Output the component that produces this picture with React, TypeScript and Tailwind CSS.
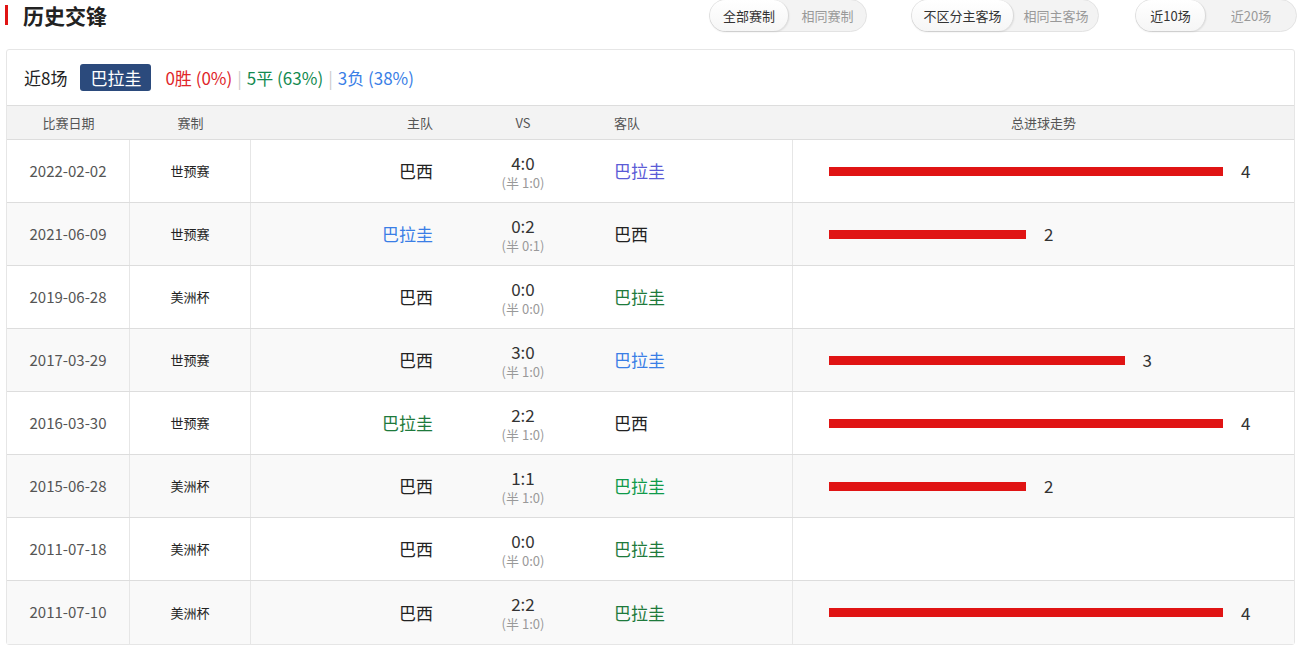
import React from "react";

const rows = [
  { d: "2022-02-02", t: "世预赛", h: "巴西", hc: "text-[#222]", s: "4:0", hs: "1:0", a: "巴拉圭", ac: "text-[#5b5bd6]", g: 4 },
  { d: "2021-06-09", t: "世预赛", h: "巴拉圭", hc: "text-[#3a7ee6]", s: "0:2", hs: "0:1", a: "巴西", ac: "text-[#222]", g: 2 },
  { d: "2019-06-28", t: "美洲杯", h: "巴西", hc: "text-[#222]", s: "0:0", hs: "0:0", a: "巴拉圭", ac: "text-[#1e7a3c]", g: 0 },
  { d: "2017-03-29", t: "世预赛", h: "巴西", hc: "text-[#222]", s: "3:0", hs: "1:0", a: "巴拉圭", ac: "text-[#3a7ee6]", g: 3 },
  { d: "2016-03-30", t: "世预赛", h: "巴拉圭", hc: "text-[#1e7a3c]", s: "2:2", hs: "1:0", a: "巴西", ac: "text-[#222]", g: 4 },
  { d: "2015-06-28", t: "美洲杯", h: "巴西", hc: "text-[#222]", s: "1:1", hs: "1:0", a: "巴拉圭", ac: "text-[#0f9a4a]", g: 2 },
  { d: "2011-07-18", t: "美洲杯", h: "巴西", hc: "text-[#222]", s: "0:0", hs: "0:0", a: "巴拉圭", ac: "text-[#1e7a3c]", g: 0 },
  { d: "2011-07-10", t: "美洲杯", h: "巴西", hc: "text-[#222]", s: "2:2", hs: "1:0", a: "巴拉圭", ac: "text-[#1e7a3c]", g: 4 },
];

function Pill({ a, b, w1, w2 }: { a: string; b: string; w1: string; w2: string }) {
  return (
    <div className="flex h-[33px] rounded-full bg-[#f3f3f3] border border-[#e3e3e3] text-[13px]">
      <div className={`${w1} flex items-center justify-center rounded-full bg-gradient-to-b from-white to-[#f6f6f6] border-r border-[#d8d8d8] shadow-[0_1px_2px_rgba(0,0,0,0.12)] text-[#333]`}>{a}</div>
      <div className={`${w2} flex items-center justify-center text-[#999]`}>{b}</div>
    </div>
  );
}

export default function App() {
  return (
    <div className="w-[1297px] h-[651px] bg-white overflow-hidden" style={{ fontFamily: '"Microsoft YaHei","Noto Sans CJK SC",sans-serif' }}>
      <div className="flex items-start h-[49px]">
        <div className="flex items-center mt-[5px] ml-[5px]">
          <div className="w-[3px] h-[20px] bg-[#e01414]" />
          <div className="ml-[15px] text-[21px] font-bold text-[#222] leading-[20px]">历史交锋</div>
        </div>
        <div className="flex gap-[18px] ml-auto -mt-[1px]">
          <div className="mr-[26px]"><Pill a="全部赛制" b="相同赛制" w1="w-[79px]" w2="w-[77px]" /></div>
          <div className="mr-[18px]"><Pill a="不区分主客场" b="相同主客场" w1="w-[102px]" w2="w-[84px]" /></div>
          <Pill a="近10场" b="近20场" w1="w-[70px]" w2="w-[90px]" />
        </div>
      </div>
      <div className="ml-[6px] mr-[2px] border border-[#e6e6e6] rounded-[3px]">
        <div className="h-[55px] flex items-center pl-[17px] text-[17px]">
          <span className="text-[#222]">近8场</span>
          <span className="ml-[13px] bg-[#2b4a7c] text-white rounded-[3px] px-[10px] h-[27px] flex items-center">巴拉圭</span>
          <span className="ml-[14px] text-[#e0252a]">0胜 (0%)</span>
          <span className="mx-[5px] text-[#ccc]">|</span>
          <span className="text-[#138a50]">5平 (63%)</span>
          <span className="mx-[5px] text-[#ccc]">|</span>
          <span className="text-[#3a7ee6]">3负 (38%)</span>
        </div>
        <div className="flex h-[35px] bg-[#f3f3f3] border-y border-[#ddd] text-[13px] text-[#555] items-center">
          <div className="w-[123px] text-center">比赛日期</div>
          <div className="w-[121px] text-center">赛制</div>
          <div className="w-[222px] text-right pr-[40px]">主队</div>
          <div className="w-[100px] text-center">VS</div>
          <div className="w-[220px] pl-[41px]">客队</div>
          <div className="flex-1 text-center">总进球走势</div>
        </div>
        {rows.map((r, i) => (
          <div key={i} className={`flex h-[63px] items-center ${i % 2 ? "bg-[#f9f9f9]" : "bg-white"} ${i < 7 ? "border-b border-[#ddd]" : ""}`}>
            <div className="w-[123px] h-full flex items-center justify-center text-[15px] text-[#555] border-r border-[#e6e6e6]">{r.d}</div>
            <div className="w-[121px] h-full flex items-center justify-center text-[13px] text-[#222] border-r border-[#e6e6e6]">{r.t}</div>
            <div className={`w-[222px] text-right pr-[40px] text-[17px] ${r.hc}`}>{r.h}</div>
            <div className="w-[100px] flex flex-col items-center leading-none">
              <div className="text-[17px] text-[#333]">{r.s}</div>
              <div className="text-[13px] text-[#999] mt-[5px]">(半 {r.hs})</div>
            </div>
            <div className={`w-[220px] h-full flex items-center pl-[41px] text-[17px] border-r border-[#e6e6e6] ${r.ac}`}>{r.a}</div>
            <div className="flex-1 flex items-center pl-[36px]">
              {r.g > 0 && (
                <>
                  <div className="h-[9px] bg-[#e01414]" style={{ width: r.g * 98.5 }} />
                  <div className="ml-[18px] text-[17px] text-[#333]">{r.g}</div>
                </>
              )}
            </div>
          </div>
        ))}
      </div>
    </div>
  );
}
